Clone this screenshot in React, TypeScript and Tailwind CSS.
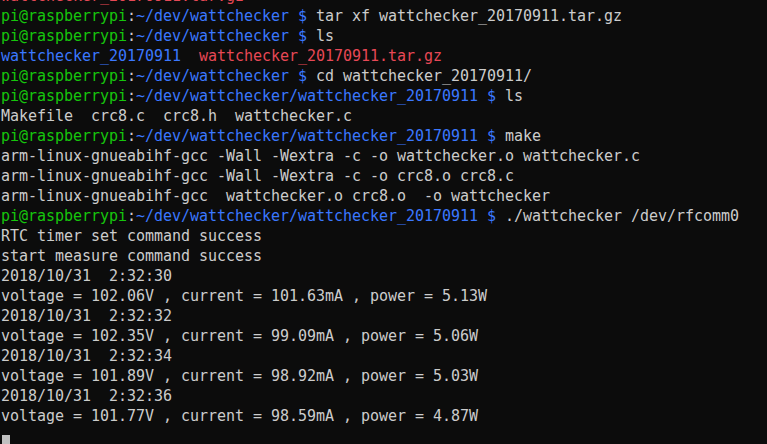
import React from "react";

const G = "text-[#16c60c]";
const B = "text-[#3b78ff]";
const R = "text-[#e74856]";

function Prompt({ path, cmd }: { path: string; cmd: string }) {
  return (
    <div className="h-[20px] whitespace-pre">
      <span className={G}>pi@raspberrypi</span>
      <span>:</span>
      <span className={B}>{path} $</span>
      <span> {cmd}</span>
    </div>
  );
}

function Line({ children }: { children: React.ReactNode }) {
  return <div className="h-[20px] whitespace-pre">{children}</div>;
}

export default function App() {
  const data = [
    ["2018/10/31  2:32:30", "voltage = 102.06V , current = 101.63mA , power = 5.13W"],
    ["2018/10/31  2:32:32", "voltage = 102.35V , current = 99.09mA , power = 5.06W"],
    ["2018/10/31  2:32:34", "voltage = 101.89V , current = 98.92mA , power = 5.03W"],
    ["2018/10/31  2:32:36", "voltage = 101.77V , current = 98.59mA , power = 4.87W"],
  ];
  return (
    <div className="w-[767px] h-[444px] overflow-hidden bg-[#0c0c0c] text-[#cccccc] font-['DejaVu_Sans_Mono',monospace] text-[15px] leading-[20px] tracking-[-0.03px]">
      <div className="mt-[-14px] pl-[1px]">
        <Line>
          <span className={R}>wattchecker_20170911.tar.gz</span>
        </Line>
        <Prompt path="~/dev/wattchecker" cmd="tar xf wattchecker_20170911.tar.gz" />
        <Prompt path="~/dev/wattchecker" cmd="ls" />
        <Line>
          <span className={B}>wattchecker_20170911</span>
          <span>  </span>
          <span className={R}>wattchecker_20170911.tar.gz</span>
        </Line>
        <Prompt path="~/dev/wattchecker" cmd="cd wattchecker_20170911/" />
        <Prompt path="~/dev/wattchecker/wattchecker_20170911" cmd="ls" />
        <Line>Makefile  crc8.c  crc8.h  wattchecker.c</Line>
        <Prompt path="~/dev/wattchecker/wattchecker_20170911" cmd="make" />
        <Line>arm-linux-gnueabihf-gcc -Wall -Wextra -c -o wattchecker.o wattchecker.c</Line>
        <Line>arm-linux-gnueabihf-gcc -Wall -Wextra -c -o crc8.o crc8.c</Line>
        <Line>arm-linux-gnueabihf-gcc  wattchecker.o crc8.o  -o wattchecker</Line>
        <Prompt path="~/dev/wattchecker/wattchecker_20170911" cmd="./wattchecker /dev/rfcomm0" />
        <Line>RTC timer set command success</Line>
        <Line>start measure command success</Line>
        {data.map(([d, v]) => (
          <React.Fragment key={d}>
            <Line>{d}</Line>
            <Line>{v}</Line>
          </React.Fragment>
        ))}
        <div className="h-[20px] flex items-end">
          <div className="ml-[1px] w-[8px] h-[11px] bg-[#c0c0c0]" />
        </div>
      </div>
    </div>
  );
}
